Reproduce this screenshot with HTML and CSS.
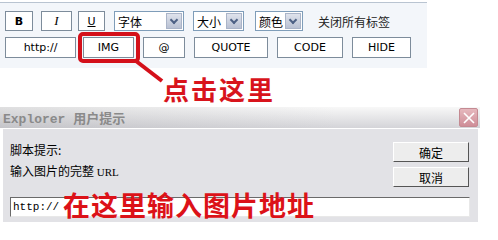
FILE: index.html
```html
<!DOCTYPE html>
<html lang="zh">
<head>
    <meta charset="UTF-8">
    <title>插入图片</title>
    <link rel="stylesheet" href="styles.css">
</head>
<body>
    <div class="page">
        <div class="toolbar">
            <div class="row">
                <button class="tb b-bold">B</button>
                <button class="tb b-ital">I</button>
                <button class="tb b-under">U</button>
                <div class="sel s-font"><span>字体</span><i class="arrow"></i></div>
                <div class="sel s-size"><span>大小</span><i class="arrow"></i></div>
                <div class="sel s-color"><span>颜色</span><i class="arrow"></i></div>
                <span class="closeall">关闭所有标签</span>
            </div>
            <div class="row row2">
                <button class="tb w-http">http://</button>
                <button class="tb w-img">IMG</button>
                <button class="tb w-at">@</button>
                <button class="tb w-quote">QUOTE</button>
                <button class="tb w-code">CODE</button>
                <button class="tb w-hide">HIDE</button>
            </div>
        </div>

        <div class="hint">点击这里</div>

        <!-- red ring + pointer line drawn over the toolbar -->
        <svg class="mark" width="200" height="90" viewBox="0 0 200 90">
            <rect x="80" y="34" width="58" height="27" rx="3" fill="none" stroke="#d4101a" stroke-width="4"/>
            <line x1="136" y1="61" x2="162" y2="81" stroke="#d4101a" stroke-width="4"/>
        </svg>

        <div class="dialog">
            <div class="titlebar">
                <span class="title">Explorer 用户提示</span>
                <span class="xbtn">
                    <svg width="14" height="14" viewBox="0 0 14 14">
                        <path d="M2 2 L12 12 M12 2 L2 12" stroke="#fff" stroke-width="1.6"/>
                    </svg>
                </span>
            </div>
            <div class="dbody">
                <div class="dtop">
                    <div class="msg">
                        <p>脚本提示:</p>
                        <p class="msg2">输入图片的完整 <span class="url">URL</span></p>
                    </div>
                    <div class="dbtns">
                        <button class="dbtn">确定</button>
                        <button class="dbtn">取消</button>
                    </div>
                </div>
                <div class="inputwrap">
                    <div class="field">http://</div>
                    <div class="bigtip">在这里输入图片地址</div>
                </div>
            </div>
        </div>
    </div>
</body>
</html>
```

FILE: styles.css
```css
*{
    margin: 0;
    padding: 0;
    box-sizing: border-box;
}
body{
    background: #fff;
    font-family: "Noto Sans CJK SC", "DejaVu Sans", sans-serif;
    font-size: 12px;
    color: #000;
}
.page{
    position: relative;
    width: 498px;
    height: 240px;
    overflow: hidden;
}
.toolbar{
    margin-top: 2px;
    width: 427px;
    height: 66px;
    background: #f3f6fa;
    border-top: 1px solid #b9c4d1;
    padding: 8px 0 0 5px;
}
.row{
    display: flex;
    align-items: center;
    height: 20px;
}
.row2{
    margin-top: 6px;
    height: 21px;
}
.tb{
    height: 100%;
    background: #fff;
    border: 1px solid #7d8c9b;
    font-family: "DejaVu Sans", sans-serif;
    font-size: 11px;
    color: #000;
}
.b-bold{ width: 28px; font-weight: bold; }
.b-ital{ width: 31px; margin-left: 8px; font-style: italic; font-family: "Liberation Serif", serif; font-size: 13px; }
.b-under{ width: 27px; margin-left: 6px; text-decoration: underline; }
.sel{
    display: flex;
    align-items: center;
    justify-content: space-between;
    height: 20px;
    background: #fff;
    border: 1px solid #7f9db9;
    padding-left: 3px;
    font-size: 12px;
}
.s-font{ width: 70px; margin-left: 9px; }
.s-size{ width: 51px; margin-left: 9px; }
.s-color{ width: 48px; margin-left: 11px; }
.arrow{
    width: 16px;
    height: 16px;
    margin-right: 1px;
    background: linear-gradient(#dfe3ec, #b9c1d3);
    border: 1px solid #aab4c8;
    position: relative;
}
.arrow::after{
    content: "";
    position: absolute;
    left: 4px;
    top: 3px;
    width: 4px;
    height: 4px;
    border-right: 2px solid #4d6185;
    border-bottom: 2px solid #4d6185;
    transform: rotate(45deg);
}
.closeall{
    margin-left: 15px;
    color: #222;
}
.w-http{ width: 71px; }
.w-img{ width: 51px; margin-left: 7px; }
.w-at{ width: 42px; margin-left: 9px; }
.w-quote{ width: 74px; margin-left: 9px; }
.w-code{ width: 66px; margin-left: 9px; }
.w-hide{ width: 59px; margin-left: 9px; }

.hint{
    height: 39px;
    padding: 4px 0 0 163px;
    color: #d8141c;
    font-size: 26px;
    font-weight: bold;
    letter-spacing: 2px;
    line-height: 34px;
}
.mark{
    position: absolute;
    left: 0;
    top: 0;
}

.dialog{
    width: 480px;
}
.titlebar{
    display: flex;
    align-items: center;
    justify-content: space-between;
    height: 22px;
    padding: 0 2px 0 3px;
    background: linear-gradient(to right, rgba(150,150,155,.25), rgba(255,255,255,0) 70%),
                linear-gradient(#f8f8f8, #d4d4d8);
    border-bottom: 1px solid #fff;
}
.title{
    font-family: "Liberation Mono", "Noto Sans CJK SC", monospace;
    font-weight: bold;
    font-size: 13px;
    color: #8a8a8a;
}
.xbtn{
    display: flex;
    align-items: center;
    justify-content: center;
    width: 19px;
    height: 19px;
    background: linear-gradient(#e6b8be, #cf8e98);
    border: 1px solid #c48a92;
    border-radius: 2px;
}
.dbody{
    margin-left: 3px;
    width: 475px;
    height: 93px;
    background: #e2e2e6;
    padding: 11px 0 0 7px;
}
.dtop{
    display: flex;
    justify-content: space-between;
    height: 57px;
    padding-right: 9px;
}
.msg p{
    line-height: 20px;
}
.msg2{
    margin-top: 1px;
}
.url{
    font-family: "Liberation Serif", serif;
    font-size: 11px;
}
.dbtns{
    display: flex;
    flex-direction: column;
    gap: 5px;
    padding-top: 2px;
}
.dbtn{
    width: 76px;
    height: 20px;
    background: #ededed;
    border: 1px solid;
    border-color: #fff #555 #555 #fff;
    font-family: "Noto Sans CJK SC", sans-serif;
    font-size: 12px;
}
.inputwrap{
    position: relative;
    width: 460px;
}
.field{
    height: 20px;
    background: #fff;
    border: 1px solid;
    border-color: #6a6a6a #e8e8e8 #e8e8e8 #6a6a6a;
    padding-left: 2px;
    font-family: "Liberation Mono", monospace;
    font-size: 11px;
    line-height: 18px;
}
.bigtip{
    position: absolute;
    left: 53px;
    top: -10px;
    color: #dc1218;
    font-size: 27px;
    font-weight: bold;
    letter-spacing: 1px;
    line-height: 36px;
    white-space: nowrap;
}
```
